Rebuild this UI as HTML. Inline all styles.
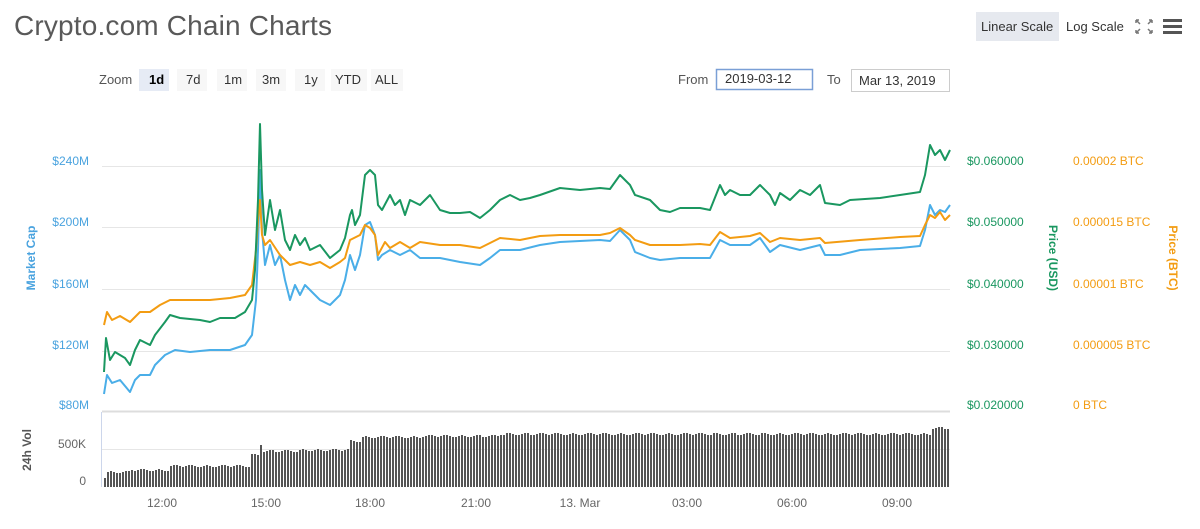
<!DOCTYPE html>
<html><head><meta charset="utf-8"><style>
body{margin:0;background:#fff;width:1200px;height:524px;overflow:hidden;font-family:"Liberation Sans","DejaVu Sans",sans-serif;}
</style></head><body>
<svg width="1200" height="524" xmlns="http://www.w3.org/2000/svg" font-family="Liberation Sans, DejaVu Sans, sans-serif">
<text x="14" y="35" font-size="28" fill="#595959" textLength="318">Crypto.com Chain Charts</text>
<rect x="976" y="12" width="83" height="29" fill="#e6e9ef"/>
<text x="981" y="31" font-size="13" fill="#333">Linear Scale</text>
<text x="1066" y="31" font-size="13" fill="#333">Log Scale</text>
<g stroke="#777" stroke-width="1.5" fill="none">
<path d="M1136 20l4 4M1136 20h3M1136 20v3M1152 20l-4 4M1152 20h-3M1152 20v3M1136 33l4-4M1136 33h3M1136 33v-3M1152 33l-4-4M1152 33h-3M1152 33v-3"/></g>
<g fill="#555"><rect x="1163" y="19" width="19" height="3"/><rect x="1163" y="25" width="19" height="3"/><rect x="1163" y="31" width="19" height="3"/></g>
<text x="99" y="84" font-size="13" fill="#555">Zoom</text>
<rect x="139" y="69" width="30" height="22" fill="#e6ebf5"/><text x="149" y="84" font-size="13" font-weight="bold" fill="#000">1d</text>
<rect x="177" y="69" width="30" height="22" fill="#f7f7f7"/><text x="186" y="84" font-size="13" fill="#333">7d</text>
<rect x="217" y="69" width="30" height="22" fill="#f7f7f7"/><text x="224" y="84" font-size="13" fill="#333">1m</text>
<rect x="256" y="69" width="30" height="22" fill="#f7f7f7"/><text x="262" y="84" font-size="13" fill="#333">3m</text>
<rect x="295" y="69" width="30" height="22" fill="#f7f7f7"/><text x="304" y="84" font-size="13" fill="#333">1y</text>
<rect x="331" y="69" width="36" height="22" fill="#f7f7f7"/><text x="335" y="84" font-size="13" fill="#333">YTD</text>
<rect x="371" y="69" width="32" height="22" fill="#f7f7f7"/><text x="375" y="84" font-size="13" fill="#333">ALL</text>
<text x="678" y="84" font-size="13" fill="#555">From</text>
<rect x="716.5" y="69.5" width="96" height="20" fill="#fff" stroke="#7a9fd6" stroke-width="1.5"/>
<text x="725" y="83" font-size="13" fill="#333">2019-03-12</text>
<text x="827" y="84" font-size="13" fill="#555">To</text>
<rect x="851.5" y="69.5" width="98" height="22" fill="#fff" stroke="#ccc"/>
<text x="859" y="85" font-size="13" fill="#333">Mar 13, 2019</text>
<g stroke="#e6e6e6" stroke-width="1">
<line x1="102" x2="950" y1="166.5" y2="166.5"/><line x1="102" x2="950" y1="227.5" y2="227.5"/><line x1="102" x2="950" y1="289.5" y2="289.5"/><line x1="102" x2="950" y1="351.5" y2="351.5"/><line x1="102" x2="950" y1="411.5" y2="411.5" stroke="#ddd" stroke-width="2"/><line x1="102" x2="950" y1="449.5" y2="449.5"/>
</g>
<line x1="101.5" x2="101.5" y1="412" y2="487" stroke="#ccd6eb"/>
<g font-size="12" fill="#4aa3df" text-anchor="end">
<text x="89" y="165">$240M</text><text x="89" y="226">$200M</text><text x="89" y="288">$160M</text><text x="89" y="349">$120M</text><text x="89" y="409">$80M</text></g>
<text transform="translate(35,258) rotate(-90)" font-size="12" font-weight="bold" fill="#4aa3df" text-anchor="middle">Market Cap</text>
<g font-size="12" fill="#1a9760"><text x="967" y="165">$0.060000</text><text x="967" y="226">$0.050000</text><text x="967" y="288">$0.040000</text><text x="967" y="349">$0.030000</text><text x="967" y="409">$0.020000</text></g>
<text transform="translate(1049,258) rotate(90)" font-size="12" font-weight="bold" fill="#1a9760" text-anchor="middle">Price (USD)</text>
<g font-size="12" fill="#f39c12"><text x="1073" y="165">0.00002 BTC</text><text x="1073" y="226">0.000015 BTC</text><text x="1073" y="288">0.00001 BTC</text><text x="1073" y="349">0.000005 BTC</text><text x="1073" y="409">0 BTC</text></g>
<text transform="translate(1169,258) rotate(90)" font-size="12" font-weight="bold" fill="#f39c12" text-anchor="middle">Price (BTC)</text>
<text transform="translate(31,450) rotate(-90)" font-size="12" font-weight="bold" fill="#555" text-anchor="middle">24h Vol</text>
<g font-size="12" fill="#666" text-anchor="end"><text x="86" y="448">500K</text><text x="86" y="485">0</text></g>
<g font-size="12" fill="#666" text-anchor="middle"><text x="162" y="507">12:00</text><text x="266" y="507">15:00</text><text x="370" y="507">18:00</text><text x="476" y="507">21:00</text><text x="580" y="507">13. Mar</text><text x="687" y="507">03:00</text><text x="792" y="507">06:00</text><text x="897" y="507">09:00</text></g>
<g id="bars" fill="#555"></g>
<g fill="none" stroke-width="2" stroke-linejoin="round">
<polyline stroke="#4aaee8" points="104,394 107,375 112,383 120,380 130,392 135,380 140,375 150,375 155,365 165,355 175,350 190,352 210,350 230,350 245,345 252,335 256,300 258,250 260,170 262,230 265,265 270,245 275,265 280,255 285,280 290,300 295,285 300,295 305,285 310,290 320,300 330,305 340,295 345,280 350,255 355,270 360,255 365,225 370,222 375,235 378,260 382,255 390,250 400,255 410,250 420,258 440,258 460,262 480,265 490,258 500,250 520,250 540,245 560,242 600,240 610,241 620,230 630,240 635,252 650,258 660,260 680,258 700,258 710,258 720,240 730,245 750,245 760,238 770,252 780,245 800,250 820,245 825,255 840,255 860,250 900,248 920,246 925,230 930,205 935,215 940,210 945,212 950,205"/>
<polyline stroke="#f39c12" points="104,325 107,312 112,320 120,316 130,322 140,312 150,312 160,305 170,300 190,300 210,300 230,298 245,295 252,285 256,250 258,220 260,200 262,235 265,245 270,240 280,255 290,265 300,262 310,265 320,262 330,268 340,262 345,258 350,240 360,235 365,225 370,228 375,235 378,255 385,242 390,248 400,242 410,248 420,242 440,245 460,245 480,248 490,243 500,238 520,240 540,236 560,235 600,235 610,233 620,228 630,235 635,240 650,245 680,245 700,244 710,245 720,232 730,238 750,236 760,233 770,242 780,238 800,240 820,238 825,243 860,240 900,237 920,236 925,225 930,215 935,218 940,212 945,220 950,215"/>
<polyline stroke="#1a9760" points="104,372 106,338 110,360 115,352 125,358 130,365 135,350 140,340 150,345 155,335 165,322 170,315 180,318 200,320 210,322 220,318 235,318 245,312 252,300 255,270 258,200 260,124 262,190 265,235 270,200 275,230 280,210 285,240 290,250 295,235 300,245 305,238 310,250 320,245 330,258 340,250 345,238 350,215 352,210 355,225 360,215 365,175 370,170 375,175 378,205 382,210 390,195 395,205 400,200 405,215 410,200 420,205 430,195 440,210 450,213 460,213 470,212 480,218 490,210 500,200 510,195 520,200 530,198 540,195 560,188 580,190 600,188 610,189 620,175 630,185 635,195 650,200 660,210 670,212 680,208 700,208 710,210 720,185 725,195 730,190 740,195 750,195 760,185 770,195 775,205 780,193 790,200 800,190 810,195 820,185 825,203 840,205 850,200 880,198 900,195 920,192 925,175 930,145 935,155 940,150 945,160 950,150"/>
</g>
</svg>
<script>
var g=document.getElementById('bars'),s='';
for(var x=104;x<950;x+=3){var t;
if(x<106)t=477;else if(x<130)t=472;else if(x<170)t=470;else if(x<250)t=466;else if(x<258)t=455;else if(x<262)t=444;else if(x<300)t=451;else if(x<350)t=450;else if(x<362)t=441;else if(x<420)t=437;else if(x<500)t=436;else if(x<930)t=434;else t=428;
t+=Math.round(Math.sin(x*1.7)*1);
s+='<rect x="'+x+'" y="'+t+'" width="2" height="'+(487-t)+'"/>';}
g.innerHTML=s;
</script>
</body></html>
